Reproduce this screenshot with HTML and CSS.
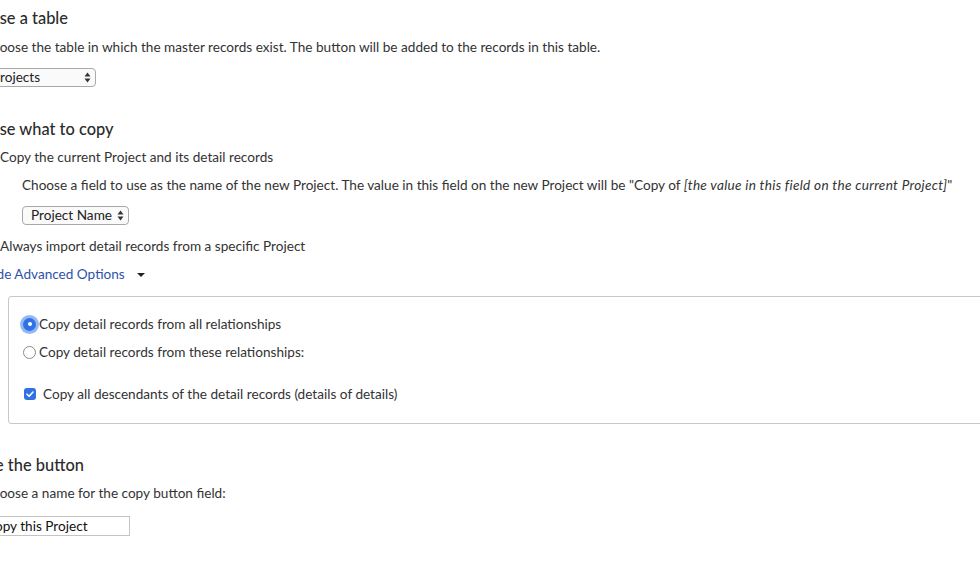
FILE: index.html
```html
<!DOCTYPE html>
<html>
<head>
<meta charset="utf-8">
<link rel="stylesheet" href="styles.css">
</head>
<body>
<div class="page">
  <section class="sec sec-table">
    <h2 class="sec-title">Choose a table</h2>
    <div class="sec-body">
      <p class="line">Choose the table in which the master records exist. The button will be added to the records in this table.</p>
      <div class="select select-table"><span>Projects</span><svg class="arrows" viewBox="0 0 7 11" width="7" height="11"><path d="M3.5 0.5 L6.5 4.5 L0.5 4.5 Z M3.5 10.5 L6.5 6.5 L0.5 6.5 Z" fill="#333"/></svg></div>
    </div>
  </section>

  <section class="sec sec-copy">
    <h2 class="sec-title">Choose what to copy</h2>
    <div class="sec-body">
      <label class="opt"><span class="radio"></span><span>Copy the current Project and its detail records</span></label>
      <div class="indent">
        <p class="line">Choose a field to use as the name of the new Project. The value in this field on the new Project will be "Copy of <em>[the value in this field on the current Project]</em>"</p>
        <div class="select select-name"><span>Project Name</span><svg class="arrows" viewBox="0 0 7 11" width="7" height="11"><path d="M3.5 0.5 L6.5 4.5 L0.5 4.5 Z M3.5 10.5 L6.5 6.5 L0.5 6.5 Z" fill="#333"/></svg></div>
      </div>
      <label class="opt opt-always"><span class="radio"></span><span>Always import detail records from a specific Project</span></label>
      <div class="adv-link">Hide Advanced Options <span class="caret"></span></div>
      <div class="adv-box">
        <label class="opt"><span class="radio on"></span><span>Copy detail records from all relationships</span></label>
        <label class="opt opt-these"><span class="radio"></span><span>Copy detail records from these relationships:</span></label>
        <label class="chk-row"><span class="chk"><svg viewBox="0 0 12 12" width="12" height="12"><path d="M3 6.2 L5.1 8.3 L9 4" fill="none" stroke="#fff" stroke-width="1.6" stroke-linecap="round" stroke-linejoin="round"/></svg></span><span>Copy all descendants of the detail records (details of details)</span></label>
      </div>
    </div>
  </section>

  <section class="sec sec-name">
    <h2 class="sec-title">Name the button</h2>
    <div class="sec-body">
      <p class="line">Choose a name for the copy button field:</p>
      <div class="text-input">Copy this Project</div>
    </div>
  </section>
</div>
</body>
</html>
```
FILE: styles.css
```css
html, body {
  margin: 0;
  padding: 0;
  overflow: hidden;
  background: #fff;
}
body {
  font-family: Lato, "Noto Sans", sans-serif;
  font-size: 13.6px;
  color: #333;
}
.page {
  margin-left: -39px;
  padding-top: 8px;
  width: 1100px;
}
.sec-title {
  margin: 0;
  font-size: 16.4px;
  line-height: 20px;
  font-weight: 500;
  color: #2b2b2b;
}
.sec-body {
  padding-left: 22px;
}
.line {
  margin: 0;
  line-height: 18px;
}
.line em {
  letter-spacing: 0.3px;
}
.sec-table .sec-title + .sec-body .line { margin-top: 10px; }
.select {
  display: inline-flex;
  align-items: center;
  justify-content: space-between;
  box-sizing: border-box;
  height: 19px;
  border: 1px solid #a9a9a9;
  border-radius: 4px;
  background: #fafafa;
  padding: 0 4px 0 8px;
  color: #222;
  line-height: 17px;
}
.arrows {
  display: block;
  margin-left: 4px;
  flex: none;
}
.select-table {
  margin-top: 12px;
  width: 113px;
}
.sec-copy { margin-top: 32px; }
.opt {
  display: flex;
  align-items: center;
  line-height: 18px;
  margin-top: 9px;
}
.radio {
  width: 13px;
  height: 13px;
  box-sizing: border-box;
  border: 1px solid #8a8a8a;
  border-radius: 50%;
  margin: 0 3px 0 1px;
  flex: none;
  background: #fff;
}
.radio.on {
  border: none;
  background: #2f72e4;
  box-shadow: 0 0 0 3px rgba(60, 125, 240, 0.55);
  position: relative;
}
.radio.on::after {
  content: "";
  position: absolute;
  left: 4.5px;
  top: 4.5px;
  width: 4px;
  height: 4px;
  border-radius: 50%;
  background: #fff;
}
.indent {
  padding-left: 39px;
}
.indent .line { margin-top: 10px; }
.select-name {
  margin-top: 12px;
  width: 107px;
}
.opt-always { margin-top: 12px; }
.adv-link {
  margin-top: 10px;
  line-height: 18px;
  color: #2e53a8;
  display: flex;
  align-items: center;
}
.caret {
  display: inline-block;
  width: 0;
  height: 0;
  border-left: 4px solid transparent;
  border-right: 4px solid transparent;
  border-top: 4px solid #222;
  margin-left: 12px;
  margin-top: 2px;
}
.adv-box {
  margin-top: 13px;
  margin-left: 25px;
  border: 1px solid #c8c8c8;
  border-radius: 3px;
  background: #fff;
  padding: 18px 0 20px 13px;
}
.adv-box .opt:first-child { margin-top: 0; }
.adv-box .opt-these { margin-top: 10px; }
.chk-row {
  display: flex;
  align-items: center;
  line-height: 18px;
  margin-top: 24px;
}
.chk {
  width: 12px;
  height: 12px;
  border-radius: 3px;
  background: #2f72e4;
  margin: 0 7px 0 2px;
  flex: none;
  display: flex;
}
.sec-name { margin-top: 31px; }
.sec-name .line { margin-top: 9px; }
.text-input {
  margin-top: 14px;
  box-sizing: border-box;
  width: 147px;
  height: 20px;
  border: 1px solid #c4c4c4;
  padding: 0 2px;
  line-height: 18px;
  color: #111;
}
```
